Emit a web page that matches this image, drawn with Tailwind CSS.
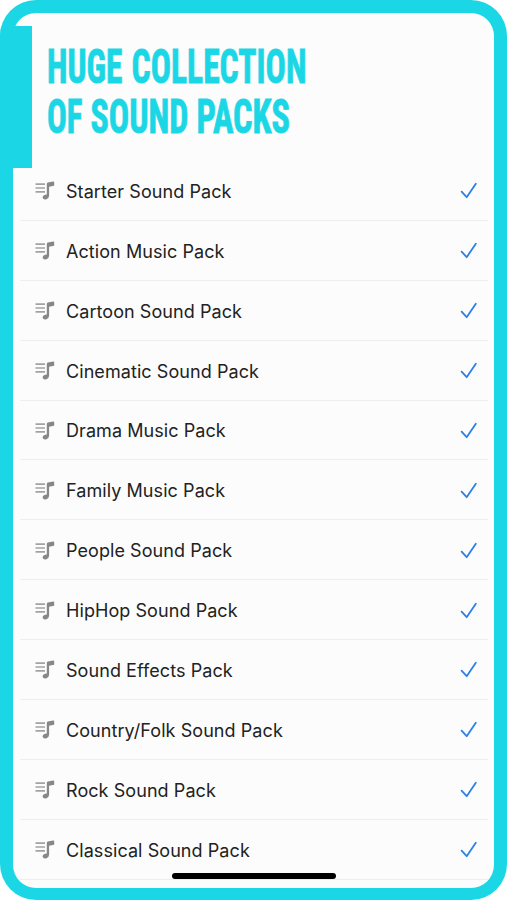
<!DOCTYPE html>
<html lang="en">
<head>
<meta charset="utf-8">
<title>Sound Packs</title>
<script src="https://cdn.jsdelivr.net/npm/@tailwindcss/browser@4"></script>
</head>
<body class="bg-white overflow-hidden">
<svg class="hidden">
  <symbol id="note" viewBox="0 0 20 20">
    <path d="M.5 3.2H10M.5 7H10M.5 10.8H10" fill="none" stroke="#a2a2a2" stroke-width="1.7"/>
    <path d="M11.8 2.9Q11.8 1.8 12.8 1.6L18.2.5Q19.2.4 19.2 1.2V4.8L14.1 5.8V14.8Q14.1 17.2 11.5 18.2Q8.4 19 7.7 17Q7.3 14.5 10.2 13.8L11.8 13.4Z" fill="#878787"/>
  </symbol>
  <symbol id="check" viewBox="0 0 18 18">
    <path d="M1.6 9.6L6.7 15.2L15.8 1.7" fill="none" stroke="#2c80e8" stroke-width="1.8" stroke-linecap="round" stroke-linejoin="round"/>
  </symbol>
</svg>
<main class="relative h-[900px] w-[507px] overflow-hidden rounded-[36px] bg-[#1bd7e5] p-[13px] pb-[12px]">
  <div class="flex h-full flex-col overflow-hidden rounded-[23px] bg-[#fcfcfc]">
    <h1 class="h-[148px] shrink-0 pl-[34px] pt-[27px]">
      <svg width="270" height="108" class="block overflow-visible font-['Roboto'] text-[48px] font-bold [font-stretch:75%]" fill="#1bd7e5" stroke="#1bd7e5" stroke-width="0.9">
        <text y="42.8"><tspan x="0" textLength="75.5" lengthAdjust="spacingAndGlyphs">HUGE</tspan> <tspan x="84.5" textLength="175" lengthAdjust="spacingAndGlyphs">COLLECTION</tspan></text>
        <text y="92.8"><tspan x="0" textLength="35.5" lengthAdjust="spacingAndGlyphs">OF</tspan> <tspan x="43.5" textLength="98" lengthAdjust="spacingAndGlyphs">SOUND</tspan> <tspan x="149.5" textLength="93.5" lengthAdjust="spacingAndGlyphs">PACKS</tspan></text>
      </svg>
    </h1>
    <ul id="packs" class="ml-[7px] mr-[6px] font-['Inter',sans-serif] text-[18px] tracking-[0.07px] text-[#222]"></ul>
  </div>
  <div class="absolute left-0 top-[26px] h-[142px] w-[32px] bg-[#1bd7e5]"></div>
  <div class="absolute bottom-[21px] left-[172px] h-[6px] w-[164px] rounded-full bg-black"></div>
</main>
<script>
  const packs = ["Starter Sound Pack", "Action Music Pack", "Cartoon Sound Pack", "Cinematic Sound Pack", "Drama Music Pack", "Family Music Pack", "People Sound Pack", "HipHop Sound Pack", "Sound Effects Pack", "Country/Folk Sound Pack", "Rock Sound Pack", "Classical Sound Pack"];
  document.getElementById("packs").innerHTML = packs.map(name => `
    <li class="flex h-[59.88px] items-center border-b border-[#eeeeee] pl-[15px] pr-[10px] pt-[2px]">
      <svg class="size-5 shrink-0"><use href="#note"/></svg>
      <span class="ml-[11px] grow whitespace-nowrap">${name}</span>
      <svg class="size-[18px] shrink-0"><use href="#check"/></svg>
    </li>`).join("");
</script>
</body>
</html>
